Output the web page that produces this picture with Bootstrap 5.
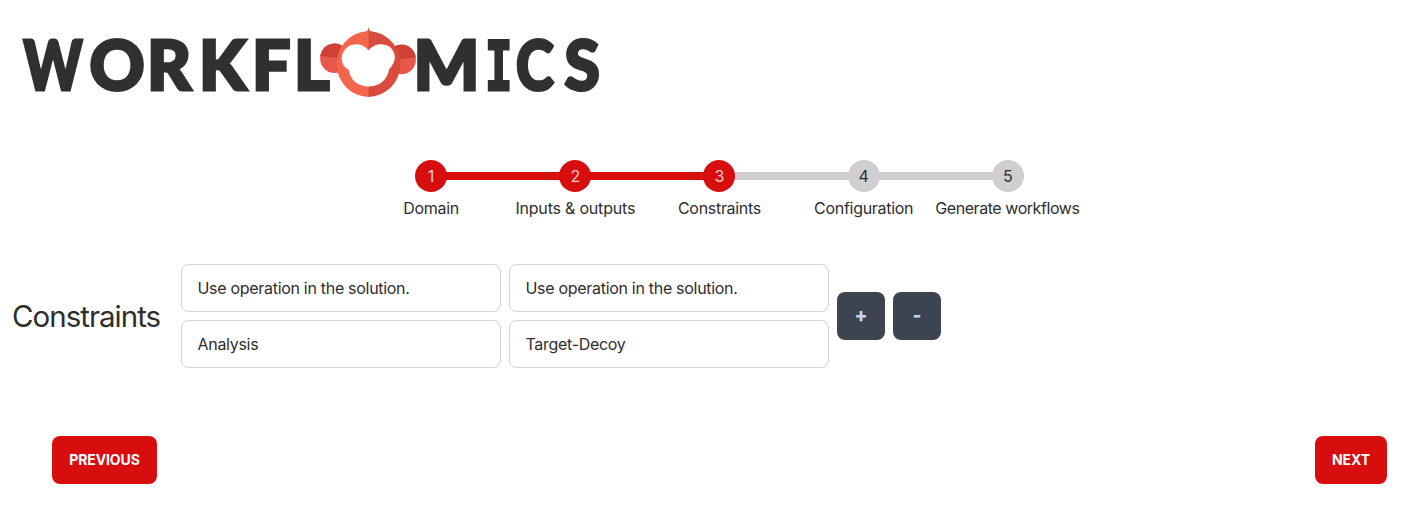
<!DOCTYPE html>
<html lang="en">
<head>
<meta charset="utf-8">
<meta name="viewport" content="width=device-width, initial-scale=1">
<title>Workflomics</title>
<link href="https://cdn.jsdelivr.net/npm/bootstrap@5.3.0/dist/css/bootstrap.min.css" rel="stylesheet">
<style>
  body { font-family: Inter, "Liberation Sans", sans-serif; color: #2e2e2e; background: #fff; font-size: 16px; line-height: 24px; letter-spacing: -.3px; }
  .brand { height: 160px; }
  .brand svg { display: block; }
  .wordmark { font-family: Lato, sans-serif; font-weight: 900; fill: #303030; stroke: #303030; }
  .wordmark .slab { font-family: "DejaVu Sans Mono", monospace; font-weight: 700; }
  .steps { width: 721px; margin-left: 359px; letter-spacing: -.3px; }
  .step { width: 144.2px; position: relative; }
  .step + .step::before { content: ""; position: absolute; top: 12px; left: -72px; width: 144px; height: 8px; background: #cfcfcf; }
  .step.done + .step.done::before { background: #d80d0d; }
  .dot { width: 32px; height: 32px; background: #cfcfcf; position: relative; z-index: 1; letter-spacing: 0; }
  .done .dot { background: #d80d0d; color: #fbcfcf; }
  .step-label { margin-top: 4px; }
  .step:nth-child(2) .step-label { letter-spacing: -.2px; }
  .step:last-child .step-label { letter-spacing: -.44px; margin-left: -1px; }
  .constraints { margin: 44px 0 0 12px; height: 104px; }
  .constraints h1 { width: 169px; font-size: 29.5px; line-height: 36px; font-weight: 400; letter-spacing: -1px; margin: 0; }
  .fields { display: grid; grid-template-columns: 320px 320px; gap: 8px; }
  .field { height: 48px; border: 1px solid #d3d3d3; border-radius: 8px; padding: 0 15.500px; }
  .square { width: 48px; height: 48px; border-radius: 8px; background: #3d4451; color: #c3d3f5; font-weight: 800; padding: 0; border: 0; font-size: 19px; }
  .action { height: 48px; border-radius: 8px; border: 0; padding: 0 0 1px; background: #d80d0d; color: #fff; font-size: 14px; font-weight: 700; letter-spacing: -.1px; }
  .prev { width: 105px; } .next { width: 72px; }
  .actions { margin: 68px 36px 0 52px; }
</style>
</head>
<body>
<header class="brand">
  <svg width="620" height="120" viewBox="0 0 620 120" role="img" aria-label="Workflomics">
    <g class="wordmark" font-size="68" stroke-width="3">
      <text transform="translate(23.500 89.500) scale(.82 1)">W</text>
      <text y="89.500" x="89.500 147 199 252 294">ORKFL</text>
      <text transform="translate(413.500 89.500) scale(1.020 1)">M</text>
      <text class="slab" transform="translate(485 89.500) scale(.67 1)">I</text>
      <text transform="translate(516 89.500) scale(.84 1)">C</text>
      <text transform="translate(564.500 89.500) scale(.94 1)">S</text>
    </g>
    <g>
      <circle cx="334.500" cy="58.500" r="14.400" fill="#e8584a"/>
      <path d="M320.100 56A14.400 14.400 0 0 1 348 53V59Z" fill="#cf4037"/>
      <circle cx="401.500" cy="59.800" r="14.400" fill="#e8584a"/>
      <path d="M388 54A14.400 14.400 0 0 1 415.900 57.300L388 61Z" fill="#cf4037"/>
      <path d="M369 26.500Q368 31 366 31.200A33 33 0 0 0 369 97Z" fill="#f4664b"/>
      <path d="M368.500 26.500Q369 31 371 31.200A33 33 0 0 1 368.500 97Z" fill="#d84c3e"/>
      <path d="M368.500 50.500C363 43 352 42.500 346.500 48C339 55 341 66 348.500 69.500C350 80 358 86.500 368.500 86.500S387.500 80 389 69.500C396.500 61 396.500 55 391 48C385 42.500 374 43 368.500 50.500Z" fill="#fff"/>
    </g>
  </svg>
</header>
<main>
  <div class="steps d-flex text-center text-nowrap">
    <div class="step done"><div class="dot rounded-circle d-flex align-items-center justify-content-center mx-auto">1</div><div class="step-label">Domain</div></div>
    <div class="step done"><div class="dot rounded-circle d-flex align-items-center justify-content-center mx-auto">2</div><div class="step-label">Inputs &amp; outputs</div></div>
    <div class="step done"><div class="dot rounded-circle d-flex align-items-center justify-content-center mx-auto">3</div><div class="step-label">Constraints</div></div>
    <div class="step"><div class="dot rounded-circle d-flex align-items-center justify-content-center mx-auto">4</div><div class="step-label">Configuration</div></div>
    <div class="step"><div class="dot rounded-circle d-flex align-items-center justify-content-center mx-auto">5</div><div class="step-label">Generate workflows</div></div>
  </div>
  <section class="constraints d-flex align-items-center">
    <h1>Constraints</h1>
    <div class="fields">
      <div class="field d-flex align-items-center">Use operation in the solution.</div>
      <div class="field d-flex align-items-center">Use operation in the solution.</div>
      <div class="field d-flex align-items-center">Analysis</div>
      <div class="field d-flex align-items-center">Target-Decoy</div>
    </div>
    <div class="d-flex gap-2 ms-2">
      <button class="btn square" type="button">+</button>
      <button class="btn square" type="button">-</button>
    </div>
  </section>
  <div class="actions d-flex justify-content-between">
    <button class="btn action prev" type="button">PREVIOUS</button>
    <button class="btn action next" type="button">NEXT</button>
  </div>
</main>
<script src="https://cdn.jsdelivr.net/npm/bootstrap@5.3.0/dist/js/bootstrap.bundle.min.js"></script>
</body>
</html>
